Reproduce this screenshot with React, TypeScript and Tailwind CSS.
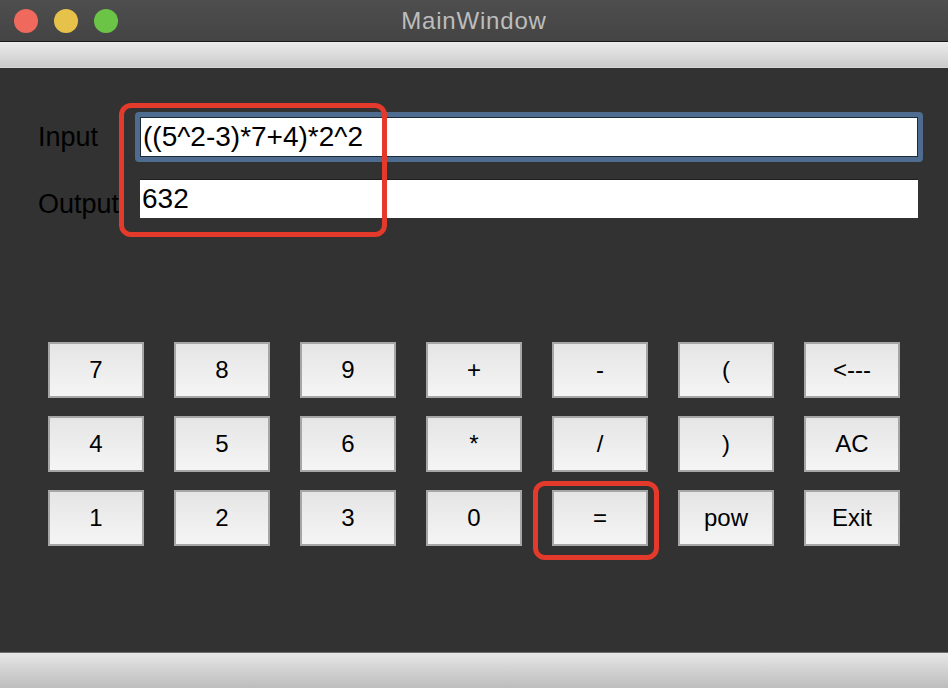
import React from 'react';

const keys = [
  ['7', '8', '9', '+', '-', '(', '<---'],
  ['4', '5', '6', '*', '/', ')', 'AC'],
  ['1', '2', '3', '0', '=', 'pow', 'Exit'],
];

export default function App() {
  return (
    <div className="relative flex h-[688px] w-[948px] flex-col overflow-hidden bg-[#323232] font-['Liberation_Sans',Arial,sans-serif]">
      {/* Title bar */}
      <div className="relative flex h-[42px] shrink-0 items-center border-b border-[#1b1b1b] bg-gradient-to-b from-[#4e4e4e] to-[#444444]">
        <div className="flex items-center gap-[16px] pl-[14px]">
          <span className="h-[24px] w-[24px] rounded-full bg-[#ef6a5d]" />
          <span className="h-[24px] w-[24px] rounded-full bg-[#e7c24a]" />
          <span className="h-[24px] w-[24px] rounded-full bg-[#6cc447]" />
        </div>
        <div className="absolute inset-0 flex items-center justify-center text-[24px] tracking-[0.8px] text-[#bdbdbd]">
          MainWindow
        </div>
      </div>

      {/* Toolbar strip */}
      <div className="h-[26px] shrink-0 border-b border-[#d6d6d6] bg-gradient-to-b from-[#ececec] to-[#cbcbcb]" />

      {/* Central widget */}
      <div className="flex flex-1 flex-col pl-[38px] pt-[44px]">
        <div className="flex items-center">
          <div className="w-[97px] text-[27px] leading-none text-black">Input</div>
          <div className="w-[788px] rounded-[4px] bg-[#4e6c8f] p-[5px]">
            <div className="flex h-[40px] items-center border border-[#1d2a3a] bg-white pl-[2px] text-[28px] font-medium text-black">
              ((5^2-3)*7+4)*2^2
            </div>
          </div>
        </div>

        <div className="mt-[17px] flex">
          <div className="w-[102px] pt-[12px] text-[27px] leading-none text-black">Output</div>
          <div className="flex h-[39px] w-[778px] items-center border-t border-[#202020] bg-white pl-[2px] text-[28px] font-medium text-black">
            632
          </div>
        </div>

        <div className="ml-[10px] mt-[124px] grid w-[852px] grid-cols-7 gap-x-[30px] gap-y-[18px]">
          {keys.flat().map((k) => (
            <button
              key={k}
              className="flex h-[56px] w-[96px] items-center justify-center border-2 border-[#a6a6a6] bg-gradient-to-b from-[#e5e5e5] to-[#f5f5f5] text-[24px] text-black"
            >
              {k}
            </button>
          ))}
        </div>
      </div>

      {/* Status bar */}
      <div className="h-[36px] shrink-0 border-t border-[#6c6c6c] bg-gradient-to-b from-[#e6e6e6] to-[#bdbdbd]" />

      {/* Annotation highlights */}
      <div className="pointer-events-none absolute left-[119px] top-[103px] h-[134px] w-[268px] rounded-[12px] border-[5px] border-[#e43a2c]" />
      <div className="pointer-events-none absolute left-[533px] top-[481px] h-[79px] w-[126px] rounded-[12px] border-[5px] border-[#e43a2c]" />
    </div>
  );
}
